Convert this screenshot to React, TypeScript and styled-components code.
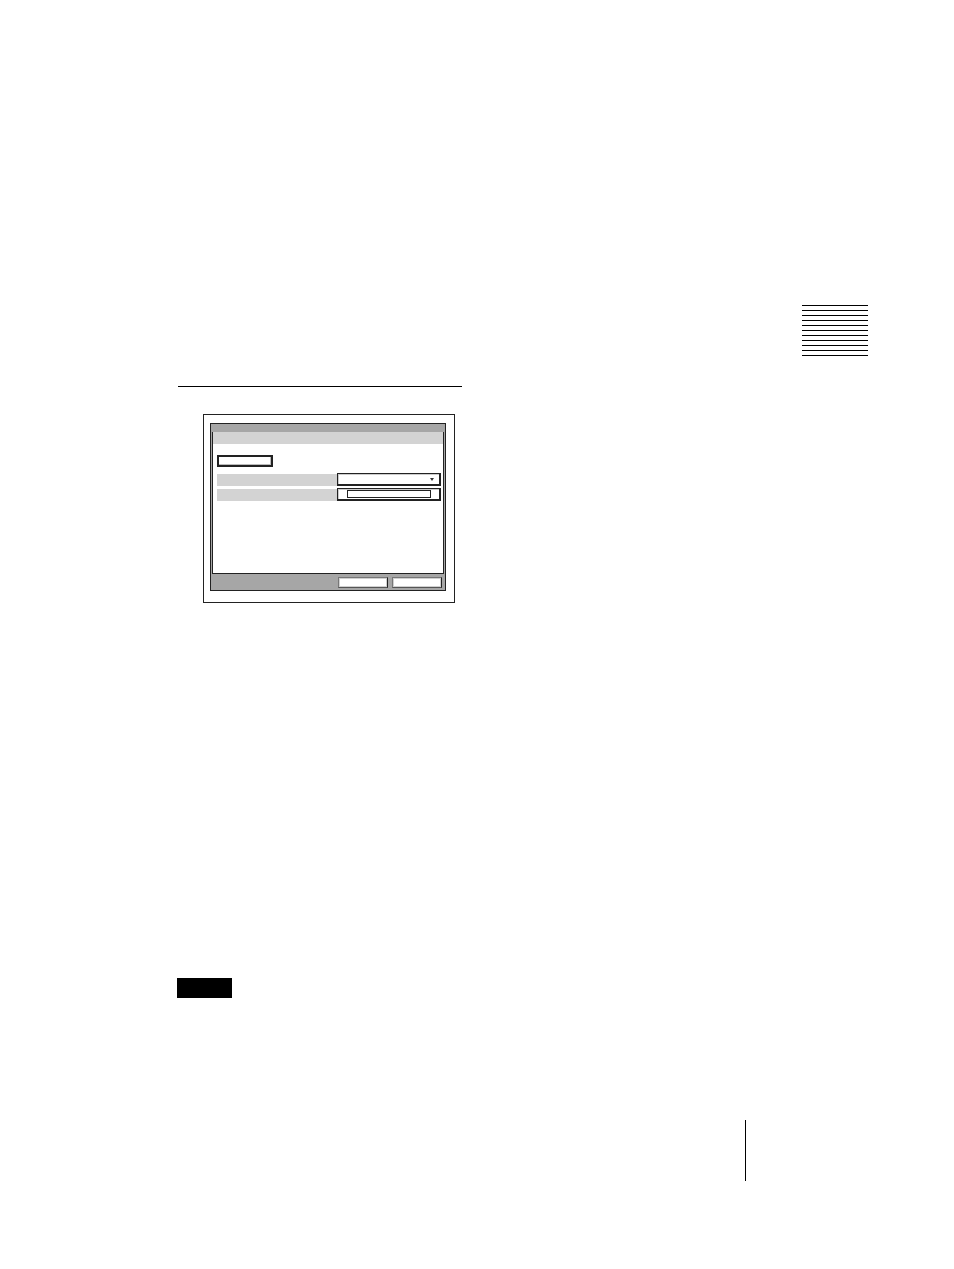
import { createGlobalStyle } from 'styled-components'
import styled from 'styled-components'

const GlobalStyle = createGlobalStyle`
  html,
  body {
    margin: 0;
    padding: 0;
    background: #fff;
  }
  body {
    font-family: 'Liberation Sans', Arial, sans-serif;
  }
  * {
    box-sizing: border-box;
  }
`

const Page = styled.div`
  width: 954px;
  min-height: 1269px;
  background: #fff;
`

const Body = styled.div`
  display: flex;
  align-items: flex-start;
`

const Main = styled.main`
  display: flex;
  flex-direction: column;
  align-items: flex-start;
  width: 285px;
  margin-left: 177px;
  padding-top: 386px;
`

const HeadRule = styled.div`
  width: 284px;
  height: 1px;
  margin-left: 1px;
  background: #000;
`

// chapter thumb tab in the right margin
const ThumbTab = styled.div`
  display: flex;
  flex-direction: column;
  gap: 4px;
  width: 66px;
  margin-left: 340px;
  padding-top: 305px;
`

const TabLine = styled.div`
  height: 1px;
  background: #000;
`

const Figure = styled.div`
  width: 252px;
  height: 189px;
  margin: 27px 0 0 26px;
  padding: 8px 0 0 6px;
  border: 1px solid #222;
`

const Window = styled.div`
  display: flex;
  flex-direction: column;
  width: 236px;
  height: 168px;
  padding: 8px 1px 0;
  background: #a6a6a6;
  border: 1px solid #222;
`

const Content = styled.div`
  display: flex;
  flex-direction: column;
  align-items: flex-start;
  height: 142px;
  background: #fff;
  border: 1px solid #222;
  border-top: none;
`

const Band = styled.div`
  align-self: stretch;
  height: 12px;
  background: #d3d3d3;
`

const SmallButton = styled.div`
  width: 56px;
  height: 12px;
  margin: 11px 0 6px 4px;
  background: #fff;
  border: 2px solid #222;
  box-shadow: inset -1px -1px 0 #bbb;
`

const Row = styled.div<{ $gap?: number }>`
  display: flex;
  align-items: center;
  height: 13px;
  margin: ${({ $gap }) => $gap ?? 0}px 0 0 4px;
`

const Label = styled.div`
  width: 120px;
  height: 12px;
  background: #d3d3d3;
`

const Control = styled.div`
  display: flex;
  align-items: center;
  width: 104px;
  height: 13px;
  padding: 0 5px 0 9px;
  background: #fff;
  border-style: solid;
  border-color: #222;
  border-width: 1px 2px 2px 1px;
  box-shadow: inset 1px 1px 0 #ccc;
`

const Arrow = styled.div`
  width: 0;
  height: 0;
  margin-left: auto;
  border-left: 2.5px solid transparent;
  border-right: 2.5px solid transparent;
  border-top: 3px solid #333;
`

const TextBox = styled.div`
  width: 84px;
  height: 8px;
  border: 1px solid #222;
`

const BottomBar = styled.div`
  display: flex;
  justify-content: flex-end;
  gap: 4px;
  height: 16px;
  padding: 3px 2px 0 0;
`

const BarButton = styled.div`
  width: 50px;
  height: 11px;
  background: #fff;
  border: 1px solid #777;
  border-right-color: #222;
  border-bottom-color: #555;
  box-shadow: inset 0 0 0 1px #d0d0d0;
`

const NoteTag = styled.div`
  width: 55px;
  height: 20px;
  margin-top: 375px;
  background: #000;
`

const Footer = styled.footer`
  padding: 122px 0 0 745px;
`

const PageRule = styled.div`
  width: 1px;
  height: 61px;
  background: #000;
`

export default function App() {
  return (
    <Page>
      <GlobalStyle />
      <Body>
        <Main>
          <HeadRule />
          <Figure>
            <Window>
              <Content>
                <Band />
                <SmallButton />
                <Row>
                  <Label />
                  <Control>
                    <Arrow />
                  </Control>
                </Row>
                <Row $gap={2}>
                  <Label />
                  <Control>
                    <TextBox />
                  </Control>
                </Row>
              </Content>
              <BottomBar>
                <BarButton />
                <BarButton />
              </BottomBar>
            </Window>
          </Figure>
          <NoteTag />
        </Main>
        <ThumbTab>
          {Array.from({ length: 11 }, (_, i) => (
            <TabLine key={i} />
          ))}
        </ThumbTab>
      </Body>
      <Footer>
        <PageRule />
      </Footer>
    </Page>
  )
}
